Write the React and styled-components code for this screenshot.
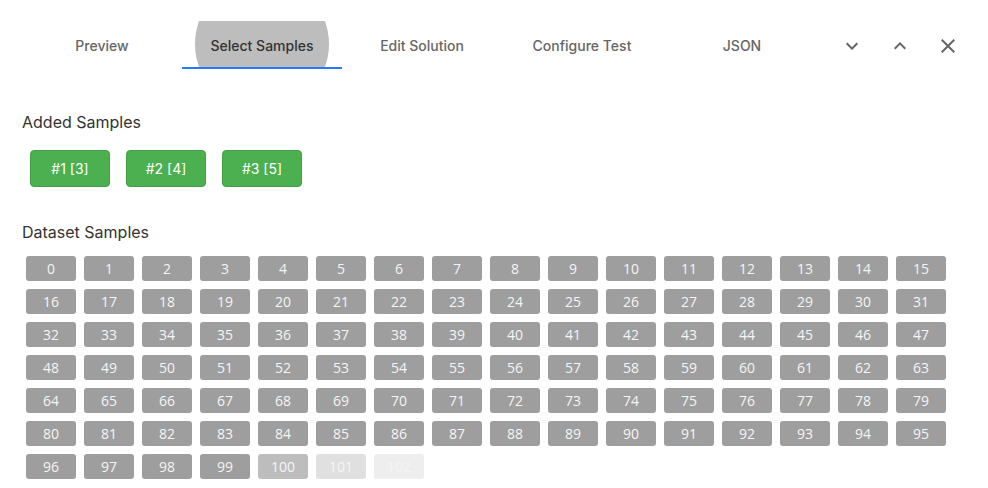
import React from "react";
import styled, { createGlobalStyle } from "styled-components";

const GlobalStyle = createGlobalStyle`
    body {
        margin: 0;
        background: #fff;
        font-family: Inter, "Noto Sans", sans-serif;
    }
`;

const Page = styled.div`
    width: 988px;
    height: 488px;
    overflow: hidden;
    padding: 21px 16px 0 22px;
    box-sizing: border-box;
`;

const Header = styled.div`
    display: flex;
    align-items: center;
    height: 48px;
`;

const Tabs = styled.div`
    display: flex;
    flex-shrink: 0;
`;

const Tab = styled.div`
    position: relative;
    overflow: hidden;
    width: 160px;
    height: 48px;
    display: flex;
    align-items: center;
    justify-content: center;
    font-size: 14px;
    font-weight: 500;
    color: ${ props => props.active ? "#333" : "#666" };
    border-bottom: 2px solid ${ props => props.active ? "#2979ff" : "transparent" };
    box-sizing: border-box;
    padding-top: 3px;
`;

const Ripple = styled.span`
    position: absolute;
    left: 13px;
    top: -44px;
    width: 134px;
    height: 134px;
    border-radius: 50%;
    background: #bdbdbd;
`;

const TabLabel = styled.span`
    position: relative;
`;

const Actions = styled.div`
    display: flex;
    margin-left: auto;
    padding-top: 2px;
`;

const IconButton = styled.div`
    width: 48px;
    height: 48px;
    display: flex;
    align-items: center;
    justify-content: center;
    color: #666;
`;

const Section = styled.div`
    margin-top: ${ props => props.top }px;
`;

const Heading = styled.div`
    font-size: 16px;
    line-height: 24px;
    color: #333;
`;

const AddedRow = styled.div`
    display: flex;
    gap: 16px;
    padding: 16px 8px 0;
`;

const AddedButton = styled.div`
    width: 80px;
    height: 37px;
    border-radius: 4px;
    background: #4caf50;
    border: 1px solid #43a047;
    box-sizing: border-box;
    color: #fff;
    font-size: 14px;
    display: flex;
    align-items: center;
    justify-content: center;
`;

const SampleGrid = styled.div`
    display: grid;
    grid-template-columns: repeat(16, 50px);
    gap: 8px;
    padding: 12px 4px 0;
`;

const Sample = styled.div`
    height: 25px;
    border-radius: 3px;
    background: ${ props => props.bg };
    color: #f5f5f5;
    font-family: "Open Sans", "Noto Sans", sans-serif;
    font-size: 14px;
    display: flex;
    align-items: center;
    justify-content: center;
`;

const tabs = ["Preview", "Select Samples", "Edit Solution", "Configure Test", "JSON"];

const Icon = ({ d }) => (
    <svg width="24" height="24" viewBox="0 0 24 24" fill="currentColor">
        <path d={ d } />
    </svg>
);

const sampleBg = (n) => {
    if (n === 100) return "#bdbdbd";
    if (n === 101) return "#e0e0e0";
    if (n === 102) return "#eeeeee";
    return "#9e9e9e";
};

export default function App() {
    const samples = Array.from({ length: 103 }, (_, i) => i);

    return (
        <Page>
            <GlobalStyle />

            <Header>
                <Tabs>
                    { tabs.map(t => (
                        <Tab key={ t } active={ t === "Select Samples" ? 1 : 0 }>
                            { t === "Select Samples" && <Ripple /> }
                            <TabLabel>{ t }</TabLabel>
                        </Tab>
                    )) }
                </Tabs>

                <Actions>
                    <IconButton>
                        <Icon d="M16.59 8.59L12 13.17 7.41 8.59 6 10l6 6 6-6z" />
                    </IconButton>
                    <IconButton>
                        <Icon d="M12 8l-6 6 1.41 1.41L12 10.83l4.59 4.58L18 14z" />
                    </IconButton>
                    <IconButton>
                        <Icon d="M19 6.41L17.59 5 12 10.59 6.41 5 5 6.41 10.59 12 5 17.59 6.41 19 12 13.41 17.59 19 19 17.59 13.41 12z" />
                    </IconButton>
                </Actions>
            </Header>

            <Section top={ 41 }>
                <Heading>Added Samples</Heading>
                <AddedRow>
                    <AddedButton>#1 [3]</AddedButton>
                    <AddedButton>#2 [4]</AddedButton>
                    <AddedButton>#3 [5]</AddedButton>
                </AddedRow>
            </Section>

            <Section top={ 33 }>
                <Heading>Dataset Samples</Heading>
                <SampleGrid>
                    { samples.map(n => (
                        <Sample key={ n } bg={ sampleBg(n) }>{ n }</Sample>
                    )) }
                </SampleGrid>
            </Section>
        </Page>
    );
}
